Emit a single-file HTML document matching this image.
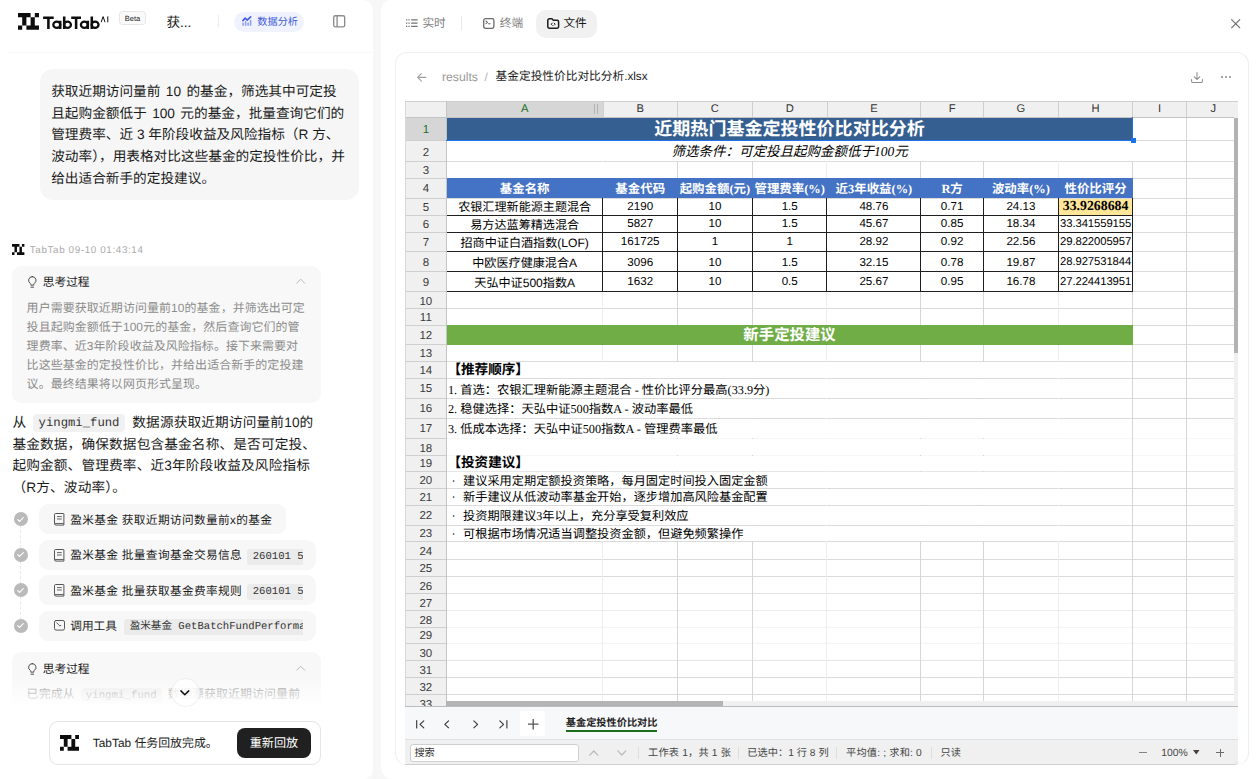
<!DOCTYPE html>
<html lang="zh-CN"><head>
<meta charset="utf-8">
<title>TabTab</title>
<style>
*{box-sizing:border-box;margin:0;padding:0}
html,body{width:1257px;height:779px;overflow:hidden;background:#f7f7f7;text-rendering:geometricPrecision;font-family:"Liberation Sans","Noto Sans CJK SC",sans-serif;color:#1a1a1a}
.abs{position:absolute}
#left{position:absolute;left:0;top:0;width:372.6px;height:779px;background:#fff;border-radius:0 10px 10px 0;overflow:hidden}
#right{position:absolute;left:380.5px;top:0;width:880px;height:779px;background:#fff;border-radius:10px 0 0 12px}
#sheet{position:absolute;left:0;top:0;width:1257px;height:779px;font-family:"Liberation Sans","Noto Sans CJK SC",sans-serif}
#sheet div{position:absolute;overflow:hidden}
#sheet div.c{overflow:visible;white-space:nowrap}
.t{position:absolute;white-space:nowrap}
.mono{font-family:"Liberation Mono","Noto Sans CJK SC",monospace}
svg{position:absolute;overflow:visible}
</style>
</head>
<body>
<!-- ================= LEFT PANEL ================= -->
<div id="left">
  <!-- header -->
  <svg style="left:18px;top:13.4px" width="21" height="16.7" viewBox="0 0 5 4" preserveAspectRatio="none"><path fill="#0d0d0d" d="M0 0h3v1h-1v2h-1v-2h-1zM4 0h1v1h-1zM3 1h1v2h1v1h-3v-1h1zM0 3h1v1h-1z"></path></svg>
  <svg style="left:43px;top:15.5px" width="66" height="14" viewBox="0 0 66 14" fill="none" stroke="#0d0d0d" stroke-width="2.55"><path d="M.1 1.800H10.700M5.400 1.800V13.100M17.200 4.800V13.100M21.200 .5V13.100M28.200 1.800H38M33.100 1.800V13.100M44.800 4.800V13.100M48.800 .5V13.100"></path><g stroke-width="2.250"><ellipse cx="13.800" cy="8.800" rx="3.500" ry="3.150"></ellipse><ellipse cx="24.500" cy="8.800" rx="3.450" ry="3.150"></ellipse><ellipse cx="41.400" cy="8.800" rx="3.500" ry="3.150"></ellipse><ellipse cx="52.100" cy="8.800" rx="3.450" ry="3.150"></ellipse></g><path d="M58.200 6.200L60.100 .6l1.900 5.600M64.800 .4V6.200" stroke-width="1" stroke-linejoin="miter"></path></svg>
  
  <div class="abs" style="left:119.4px;top:11.2px;width:26.2px;height:13.6px;border:1px solid #e6e6e6;border-radius:3.5px;background:#fafafa"></div>
  <div class="t" style="left:119.4px;top:11.2px;width:26.2px;text-align:center;font-size:7.5px;line-height:15.8px;color:#1a1a1a;letter-spacing:.05px">Beta</div>
  <div class="t" style="left:166.4px;top:12.5px;font-size:13.6px;line-height:20px;color:#111">获...</div>
  <div class="abs" style="left:217.8px;top:15px;width:1px;height:12px;background:#ececec"></div>
  <div class="abs" style="left:234.2px;top:11.8px;width:70px;height:20px;border-radius:10px;background:#f0f2fe"></div>
  <svg style="left:241.7px;top:15.8px" width="9.6" height="9.8" viewBox="0 0 9.6 9.8" fill="none" stroke="#4560dc" stroke-linecap="round" stroke-linejoin="round"><path d="M.9 4.600l2.300-2.400 2 1.900L8.700.9" stroke-width="1.700"></path><path d="M1.100 9.200V7.300M3.600 9.200V5.900M6.100 9.200V7M8.600 9.200V4.500" stroke-width="1.600" opacity=".55"></path></svg>
  <div class="t" style="left:257.3px;top:12.9px;font-size:10.2px;line-height:20.6px;color:#3f5bd8">数据分析</div>
  <svg style="left:332.8px;top:15.2px" width="12.4" height="12.6" viewBox="0 0 12.4 12.6" fill="none" stroke="#8c8c8c" stroke-width="1.350"><rect x=".7" y=".7" width="11" height="11.200" rx="1.700"></rect><path d="M4.100 .7v11.200"></path></svg>
  <div class="abs" style="left:8px;top:52.4px;width:364px;height:1px;background:#f8f8f8"></div>

  <!-- user bubble -->
  <div class="abs" style="left:39.8px;top:69.3px;width:318.8px;height:130.3px;border-radius:13px;background:#f6f6f6"></div>
  <div class="abs" style="left:51.2px;top:80.8px;width:300px;font-size:13.66px;line-height:21.85px;color:#1a1a1a;white-space:nowrap"><span style="word-spacing:1.6px">获取近期访问量前 10 的基金，筛选其中可定投<br>且起购金额低于 100 元的基金，批量查询它们的</span><br>管理费率、近 3 年阶段收益及风险指标（R 方、<br>波动率），用表格对比这些基金的定投性价比，并<br>给出适合新手的定投建议。</div>

  <!-- assistant header -->
  <svg style="left:11.8px;top:244px" width="12.4" height="10.9" viewBox="0 0 5 4" preserveAspectRatio="none"><path fill="#0d0d0d" d="M0 0h3v1h-1v2h-1v-2h-1zM4 0h1v1h-1zM3 1h1v2h1v1h-3v-1h1zM0 3h1v1h-1z"></path></svg>
  <div class="t" style="left:29.8px;top:244.8px;font-size:9.85px;line-height:12px;color:#ababab;letter-spacing:.62px">TabTab 09-10 01:43:14</div>

  <!-- thinking box 1 -->
  <div class="abs" style="left:11.8px;top:265.7px;width:309px;height:137.4px;border-radius:9px;background:#f8f8f8"></div>
  <svg style="left:27.5px;top:276.0px" width="8.6" height="11.8" viewBox="0 0 8.6 11.8" fill="none" stroke="#4a4a4a" stroke-width="1" stroke-linecap="round" stroke-linejoin="round"><path d="M4.300.6a3.700 3.700 0 0 0-2.100 6.750c.4.300.6.700.6 1.100v.7h3v-.7c0-.4.200-.8.600-1.100A3.700 3.700 0 0 0 4.300.6z"></path><path d="M3 11.200h2.600"></path></svg>
  <div class="t" style="left:42.8px;top:274.1px;font-size:11.7px;line-height:18px;color:#1a1a1a">思考过程</div>
  <svg style="left:295.6px;top:278.4px" width="9.4" height="6" viewBox="0 0 9.4 6" fill="none" stroke="#b9b9b9" stroke-width="1" stroke-linecap="round" stroke-linejoin="round"><path d="M.7 5.2l4-4 4 4"></path></svg>
  <div class="abs" style="left:26.6px;top:298.9px;width:290px;font-size:11.95px;line-height:19.05px;color:#8c8c8c;white-space:nowrap;letter-spacing:.1px">用户需要获取近期访问量前10的基金，并筛选出可定<br>投且起购金额低于100元的基金，然后查询它们的管<br>理费率、近3年阶段收益及风险指标。接下来需要对<br>比这些基金的定投性价比，并给出适合新手的定投建<br>议。最终结果将以网页形式呈现。</div>

  <!-- paragraph -->
  <div class="abs" style="left:12.4px;top:411.6px;width:320px;font-size:13.66px;line-height:21.9px;color:#1a1a1a;white-space:nowrap;letter-spacing:.15px">从<span class="mono" style="display:inline-block;margin:0 7px 0 6.6px;padding:0 5.8px;height:18.6px;line-height:19px;border-radius:4px;background:#f1f1f1;font-size:12.25px;vertical-align:1px;color:#333;letter-spacing:0">yingmi_fund</span>数据源获取近期访问量前10的<br>基金数据，确保数据包含基金名称、是否可定投、<br>起购金额、管理费率、近3年阶段收益及风险指标<br>（R方、波动率）。</div>

  <!-- steps -->
  <div class="abs" style="left:20.4px;top:520px;width:0;height:105px;border-left:1.6px dashed #e8e8e8"></div>
  <div class="abs" style="left:13.8px;top:512.3px;width:14.200px;height:14.200px;border-radius:50%;background:#bababa"></div>
<svg style="left:17.4px;top:516.8px" width="7" height="5.200" viewBox="0 0 7 5.200" fill="none" stroke="#fff" stroke-width="1.1" stroke-linecap="round" stroke-linejoin="round"><path d="M.7 2.700l1.900 1.800L6.300.7"></path></svg>
<div class="abs" style="left:38.600px;top:504.4px;width:247.8px;height:30.100px;border-radius:9px;background:#f7f7f7;overflow:hidden">
</div>
<svg style="left:53.8px;top:513.3px" width="10.4" height="12.6" viewBox="0 0 10.4 12.6" fill="none" stroke="#555" stroke-width="1" stroke-linejoin="round"><path d="M1.700.5h7.700a.5.5 0 0 1 .5.5v11.100H2a1.500 1.500 0 0 1-1.500-1.500V1.700A1.200 1.200 0 0 1 1.700.5z"></path><path d="M.6 10.500h9.200M3 3.600h4.800M3 6h4.800" stroke-width=".9"></path></svg>
<div class="abs" style="left:70.200px;top:504.4px;width:232.6px;height:29.600px;line-height:29.600px;white-space:nowrap;overflow:hidden"><span style="font-size:11.700px;color:#1a1a1a;letter-spacing:.33px;position:relative;top:.7px">盈米基金 获取近期访问数量前x的基金</span></div>
<div class="abs" style="left:13.8px;top:547.7px;width:14.200px;height:14.200px;border-radius:50%;background:#bababa"></div>
<svg style="left:17.4px;top:552.2px" width="7" height="5.200" viewBox="0 0 7 5.200" fill="none" stroke="#fff" stroke-width="1.1" stroke-linecap="round" stroke-linejoin="round"><path d="M.7 2.700l1.900 1.800L6.300.7"></path></svg>
<div class="abs" style="left:38.600px;top:539.8px;width:277.0px;height:30.100px;border-radius:9px;background:#f7f7f7;overflow:hidden">
</div>
<svg style="left:53.8px;top:548.7px" width="10.4" height="12.6" viewBox="0 0 10.4 12.6" fill="none" stroke="#555" stroke-width="1" stroke-linejoin="round"><path d="M1.700.5h7.700a.5.5 0 0 1 .5.5v11.100H2a1.500 1.500 0 0 1-1.500-1.500V1.700A1.200 1.200 0 0 1 1.700.5z"></path><path d="M.6 10.500h9.200M3 3.600h4.800M3 6h4.800" stroke-width=".9"></path></svg>
<div class="abs" style="left:70.200px;top:539.8px;width:232.6px;height:29.600px;line-height:29.600px;white-space:nowrap;overflow:hidden"><span style="font-size:11.700px;color:#1a1a1a;letter-spacing:.33px;position:relative;top:.7px">盈米基金 批量查询基金交易信息</span><span class="mono" style="display:inline-block;margin-left:5.2px;padding:0 5.500px;height:16px;line-height:16.500px;border-radius:3px 0 0 3px;background:#ebebeb;font-size:10.600px;color:#333;vertical-align:middle;position:relative;top:2px;width:200px">260101 5</span></div>
<div class="abs" style="left:13.8px;top:583.1px;width:14.200px;height:14.200px;border-radius:50%;background:#bababa"></div>
<svg style="left:17.4px;top:587.6px" width="7" height="5.200" viewBox="0 0 7 5.200" fill="none" stroke="#fff" stroke-width="1.1" stroke-linecap="round" stroke-linejoin="round"><path d="M.7 2.700l1.900 1.800L6.300.7"></path></svg>
<div class="abs" style="left:38.600px;top:575.2px;width:277.0px;height:30.100px;border-radius:9px;background:#f7f7f7;overflow:hidden">
</div>
<svg style="left:53.8px;top:584.1px" width="10.4" height="12.6" viewBox="0 0 10.4 12.6" fill="none" stroke="#555" stroke-width="1" stroke-linejoin="round"><path d="M1.700.5h7.700a.5.5 0 0 1 .5.5v11.100H2a1.500 1.500 0 0 1-1.500-1.500V1.700A1.200 1.200 0 0 1 1.700.5z"></path><path d="M.6 10.500h9.200M3 3.600h4.800M3 6h4.800" stroke-width=".9"></path></svg>
<div class="abs" style="left:70.200px;top:575.2px;width:232.6px;height:29.600px;line-height:29.600px;white-space:nowrap;overflow:hidden"><span style="font-size:11.700px;color:#1a1a1a;letter-spacing:.33px;position:relative;top:.7px">盈米基金 批量获取基金费率规则</span><span class="mono" style="display:inline-block;margin-left:5.2px;padding:0 5.500px;height:16px;line-height:16.500px;border-radius:3px 0 0 3px;background:#ebebeb;font-size:10.600px;color:#333;vertical-align:middle;position:relative;top:2px;width:200px">260101 5</span></div>
<div class="abs" style="left:13.8px;top:618.5px;width:14.200px;height:14.200px;border-radius:50%;background:#bababa"></div>
<svg style="left:17.4px;top:623.0px" width="7" height="5.200" viewBox="0 0 7 5.200" fill="none" stroke="#fff" stroke-width="1.1" stroke-linecap="round" stroke-linejoin="round"><path d="M.7 2.700l1.900 1.800L6.300.7"></path></svg>
<div class="abs" style="left:38.600px;top:610.6px;width:277.0px;height:30.100px;border-radius:9px;background:#f7f7f7;overflow:hidden">
</div>
<svg style="left:53.6px;top:620.3px" width="11" height="10.6" viewBox="0 0 11 10.6" fill="none" stroke="#555" stroke-width="1" stroke-linecap="round" stroke-linejoin="round"><rect x=".5" y=".5" width="10" height="9.600" rx="1.600"></rect><path d="M2.800 3l1.700 1.500M5.300 5.600h1.500"></path></svg>
<div class="abs" style="left:70.200px;top:610.6px;width:232.6px;height:29.600px;line-height:29.600px;white-space:nowrap;overflow:hidden"><span style="font-size:11.700px;color:#1a1a1a;letter-spacing:0px;position:relative;top:.7px">调用工具</span><span class="mono" style="display:inline-block;margin-left:7.2px;padding:0 5.500px;height:16px;line-height:16.500px;border-radius:3px 0 0 3px;background:#ebebeb;font-size:10.600px;color:#333;vertical-align:middle;position:relative;top:2px;width:200px">盈米基金 GetBatchFundPerforma</span></div>

  <!-- thinking box 2 -->
  <div class="abs" style="left:12.2px;top:652.2px;width:309px;height:70px;border-radius:9px;background:#f8f8f8"></div>
  <svg style="left:27.5px;top:662.6px" width="8.6" height="11.8" viewBox="0 0 8.6 11.8" fill="none" stroke="#4a4a4a" stroke-width="1" stroke-linecap="round" stroke-linejoin="round"><path d="M4.300.6a3.700 3.700 0 0 0-2.100 6.750c.4.300.6.700.6 1.100v.7h3v-.7c0-.4.200-.8.600-1.100A3.700 3.700 0 0 0 4.300.6z"></path><path d="M3 11.200h2.600"></path></svg>
  <div class="t" style="left:42.8px;top:660.6px;font-size:11.7px;line-height:18px;color:#1a1a1a">思考过程</div>
  <svg style="left:295.6px;top:664.8px" width="9.4" height="6" viewBox="0 0 9.4 6" fill="none" stroke="#b9b9b9" stroke-width="1" stroke-linecap="round" stroke-linejoin="round"><path d="M.7 5.2l4-4 4 4"></path></svg>
  <div class="abs" style="left:26.6px;top:684.8px;width:290px;font-size:11.95px;line-height:19.05px;color:#8c8c8c;white-space:nowrap;letter-spacing:.1px">已完成从<span class="mono" style="display:inline-block;margin:0 6px 0 6px;padding:0 5px;height:16.4px;line-height:17px;border-radius:4px;background:#ececec;font-size:10.6px;vertical-align:0px;color:#999">yingmi_fund</span>数据源获取近期访问量前</div>
  <!-- fade -->
  <div class="abs" style="left:0;top:678px;width:372px;height:28px;background:linear-gradient(to bottom,rgba(255,255,255,0) 0%,rgba(255,255,255,1) 100%)"></div>
  <div class="abs" style="left:0;top:706px;width:372px;height:73px;background:#fff"></div>
  <!-- scroll button -->
  <div class="abs" style="left:170.8px;top:678.2px;width:28.8px;height:28.8px;border-radius:50%;background:rgba(255,255,255,.72);border:1px solid #efefef"></div>
  <svg style="left:180.4px;top:689.6px" width="9.6" height="6" viewBox="0 0 9.6 6" fill="none" stroke="#111" stroke-width="1.5" stroke-linecap="round" stroke-linejoin="round"><path d="M.9.9l3.900 3.900L8.700.9"></path></svg>

  <!-- bottom card -->
  <div class="abs" style="left:49.3px;top:720.8px;width:272px;height:44.7px;border:1px solid #e6e6e6;border-radius:9px;background:#fff"></div>
  <svg style="left:60px;top:735.2px" width="19" height="15.8" viewBox="0 0 5 4" preserveAspectRatio="none"><path fill="#0d0d0d" d="M0 0h3v1h-1v2h-1v-2h-1zM4 0h1v1h-1zM3 1h1v2h1v1h-3v-1h1zM0 3h1v1h-1z"></path></svg>
  <div class="t" style="left:92.8px;top:733.4px;font-size:11.9px;line-height:20px;color:#1a1a1a">TabTab 任务回放完成。</div>
  <div class="abs" style="left:236.9px;top:728.2px;width:74px;height:30px;border-radius:8px;background:#202020"></div>
  <div class="t" style="left:236.9px;top:728.2px;width:74px;text-align:center;font-size:12.1px;line-height:30px;color:#fff">重新回放</div>
</div>

<!-- ================= RIGHT PANEL ================= -->
<div id="right"></div>
<!-- tabs -->
<svg style="left:405.6px;top:19.2px" width="11.6" height="8.2" viewBox="0 0 11.6 8.2" fill="none" stroke="#727272" stroke-width="1.25"><path d="M0 .8h1.300M2.400 .8h1.300M5.200 .8h6.400M0 4.100h1.300M2.400 4.100h1.300M5.200 4.100h6.400M0 7.400h1.300M2.400 7.400h1.300M5.200 7.400h6.400"></path></svg>
<div class="t" style="left:422.4px;top:14.5px;font-size:11.7px;line-height:18px;color:#7f7f7f">实时</div>
<div class="abs" style="left:461px;top:16.4px;width:1px;height:13.2px;background:#e8e8e8"></div>
<svg style="left:483.2px;top:17.9px" width="11.6" height="11" viewBox="0 0 11.6 11" fill="none" stroke="#6a6a6a" stroke-width="1.3" stroke-linecap="round" stroke-linejoin="round"><rect x=".7" y=".7" width="10.200" height="9.600" rx="1.700"></rect><path d="M3 3l1.500 1.300L3 5.600M5.500 5.800h1.700" stroke-width="1.050"></path></svg>
<div class="t" style="left:499.8px;top:14.5px;font-size:11.7px;line-height:18px;color:#7f7f7f">终端</div>
<div class="abs" style="left:536.2px;top:9.7px;width:60.9px;height:27.9px;border-radius:10px;background:#f1f1f1"></div>
<svg style="left:546.8px;top:17.8px" width="12.4" height="11" viewBox="0 0 12.4 11" fill="none" stroke="#1c1c1c" stroke-width="1.5" stroke-linecap="round" stroke-linejoin="round"><path d="M.8 2.300V8.700a1.500 1.500 0 0 0 1.500 1.500h7.800a1.500 1.500 0 0 0 1.500-1.500V3.700a1.500 1.500 0 0 0-1.500-1.500H6.300L5 .8H2.300A1.500 1.500 0 0 0 .8 2.300z"></path><path d="M5.300 5.100L4.200 6.200l1.100 1.100M7.100 5.100l1.100 1.100-1.100 1.100" stroke-width="1"></path></svg>
<div class="t" style="left:563.4px;top:14.5px;font-size:11.7px;line-height:18px;color:#1a1a1a">文件</div>
<svg style="left:1231.2px;top:18.6px" width="9.4" height="9.4" viewBox="0 0 9.4 9.4" fill="none" stroke="#666" stroke-width="1.05" stroke-linecap="round"><path d="M.6.6l8.200 8.200M8.800.6L.6 8.800"></path></svg>

<!-- file card -->
<div class="abs" style="left:394.6px;top:52px;width:854.2px;height:713.4px;border:1px solid #efefef;border-bottom-color:#f5f5f5;border-radius:12px;background:#fff"></div>
<svg style="left:416.6px;top:72.8px" width="9.4" height="8.8" viewBox="0 0 9.4 8.8" fill="none" stroke="#a0a0a0" stroke-width="1.1" stroke-linecap="round" stroke-linejoin="round"><path d="M8.800 4.400H.8M4.400.7L.7 4.400l3.700 3.700"></path></svg>
<div class="t" style="left:442px;top:68px;font-size:12.2px;line-height:18px;color:#9a9a9a">results</div>
<div class="t" style="left:484.6px;top:68px;font-size:11.9px;line-height:18px;color:#b0b0b0">/</div>
<div class="t" style="left:495.6px;top:68px;font-size:11.7px;line-height:18px;color:#1a1a1a">基金定投性价比对比分析.xlsx</div>
<svg style="left:1191.2px;top:71.6px" width="12" height="11.2" viewBox="0 0 12 11.2" fill="none" stroke="#8c8c8c" stroke-width="1.05" stroke-linecap="round" stroke-linejoin="round"><path d="M6 .6v6.800M3.200 4.800L6 7.500l2.800-2.700M.6 7.600v1.600a1.400 1.400 0 0 0 1.400 1.400h8a1.400 1.400 0 0 0 1.400-1.400V7.600"></path></svg>
<div class="abs" style="left:1221px;top:76.3px;width:2px;height:1.8px;background:#8a8a8a;border-radius:1px"></div>
<div class="abs" style="left:1225.2px;top:76.3px;width:2px;height:1.8px;background:#8a8a8a;border-radius:1px"></div>
<div class="abs" style="left:1229.4px;top:76.3px;width:2px;height:1.8px;background:#8a8a8a;border-radius:1px"></div>

<!-- spreadsheet -->
<div id="sheet">
<div style="left:405.3px;top:101.4px;width:833.0px;height:599.4px;background:#fff;"></div>
<div style="left:446.4px;top:140.0px;width:787.7px;height:1.0px;background:#dbdbdb;"></div>
<div style="left:446.4px;top:161.0px;width:787.7px;height:1.0px;background:#dbdbdb;"></div>
<div style="left:446.4px;top:178.0px;width:787.7px;height:1.0px;background:#dbdbdb;"></div>
<div style="left:446.4px;top:198.0px;width:787.7px;height:1.0px;background:#dbdbdb;"></div>
<div style="left:446.4px;top:215.0px;width:787.7px;height:1.0px;background:#dbdbdb;"></div>
<div style="left:446.4px;top:232.0px;width:787.7px;height:1.0px;background:#dbdbdb;"></div>
<div style="left:446.4px;top:251.0px;width:787.7px;height:1.0px;background:#dbdbdb;"></div>
<div style="left:446.4px;top:271.0px;width:787.7px;height:1.0px;background:#dbdbdb;"></div>
<div style="left:446.4px;top:291.0px;width:787.7px;height:1.0px;background:#dbdbdb;"></div>
<div style="left:446.4px;top:308.0px;width:787.7px;height:1.0px;background:#dbdbdb;"></div>
<div style="left:446.4px;top:325.0px;width:787.7px;height:1.0px;background:#dbdbdb;"></div>
<div style="left:446.4px;top:344.0px;width:787.7px;height:1.0px;background:#dbdbdb;"></div>
<div style="left:446.4px;top:361.0px;width:787.7px;height:1.0px;background:#dbdbdb;"></div>
<div style="left:446.4px;top:378.0px;width:787.7px;height:1.0px;background:#dbdbdb;"></div>
<div style="left:446.4px;top:398.0px;width:787.7px;height:1.0px;background:#dbdbdb;"></div>
<div style="left:446.4px;top:418.0px;width:787.7px;height:1.0px;background:#dbdbdb;"></div>
<div style="left:446.4px;top:438.0px;width:787.7px;height:1.0px;background:#f7f7f7;"></div>
<div style="left:446.4px;top:455.0px;width:787.7px;height:1.0px;background:#f7f7f7;"></div>
<div style="left:446.4px;top:471.0px;width:787.7px;height:1.0px;background:#e6e6e6;"></div>
<div style="left:446.4px;top:488.0px;width:787.7px;height:1.0px;background:#dbdbdb;"></div>
<div style="left:446.4px;top:505.0px;width:787.7px;height:1.0px;background:#dbdbdb;"></div>
<div style="left:446.4px;top:525.0px;width:787.7px;height:1.0px;background:#dbdbdb;"></div>
<div style="left:446.4px;top:541.0px;width:787.7px;height:1.0px;background:#dbdbdb;"></div>
<div style="left:446.4px;top:559.0px;width:787.7px;height:1.0px;background:#dbdbdb;"></div>
<div style="left:446.4px;top:576.0px;width:787.7px;height:1.0px;background:#dbdbdb;"></div>
<div style="left:446.4px;top:593.0px;width:787.7px;height:1.0px;background:#e2e2e2;"></div>
<div style="left:446.4px;top:610.0px;width:787.7px;height:1.0px;background:#ececec;"></div>
<div style="left:446.4px;top:627.0px;width:787.7px;height:1.0px;background:#f4f4f4;"></div>
<div style="left:446.4px;top:643.0px;width:787.7px;height:1.0px;background:#f4f4f4;"></div>
<div style="left:446.4px;top:660.0px;width:787.7px;height:1.0px;background:#e6e6e6;"></div>
<div style="left:446.4px;top:677.0px;width:787.7px;height:1.0px;background:#dbdbdb;"></div>
<div style="left:446.4px;top:694.0px;width:787.7px;height:1.0px;background:#dbdbdb;"></div>
<div style="left:602.0px;top:117.4px;width:1.0px;height:583.4px;background:#efefef;"></div>
<div style="left:677.0px;top:117.4px;width:1.0px;height:583.4px;background:#d6d6d6;"></div>
<div style="left:752.0px;top:117.4px;width:1.0px;height:583.4px;background:#d6d6d6;"></div>
<div style="left:826.0px;top:117.4px;width:1.0px;height:583.4px;background:#efefef;"></div>
<div style="left:920.0px;top:117.4px;width:1.0px;height:583.4px;background:#d6d6d6;"></div>
<div style="left:983.0px;top:117.4px;width:1.0px;height:583.4px;background:#d6d6d6;"></div>
<div style="left:1058.0px;top:117.4px;width:1.0px;height:583.4px;background:#efefef;"></div>
<div style="left:1132.0px;top:117.4px;width:1.0px;height:583.4px;background:#d6d6d6;"></div>
<div style="left:1186.0px;top:117.4px;width:1.0px;height:583.4px;background:#d6d6d6;"></div>
<div class="c" style="left:446.4px;top:117.4px;width:686.3px;height:23.3px;background:#365f91;color:#fff;font-weight:bold;font-size:18.05px;line-height:24.3px;text-align:center;">近期热门基金定投性价比对比分析</div>
<div class="c" style="left:446.4px;top:141.2px;width:686.3px;height:19.6px;background:#fff;color:#000;font-style:italic;font-size:13.5px;line-height:22.8px;text-align:center;font-family:'Liberation Serif','Noto Sans CJK SC',sans-serif;">筛选条件：可定投且起购金额低于100元</div>
<div style="left:446.4px;top:178.2px;width:686.3px;height:20.2px;background:#4472c4;"></div>
<div class="c" style="left:440.4px;top:178.2px;width:168.6px;height:20.2px;color:#fff;font-weight:bold;font-size:12.45px;line-height:22.7px;text-align:center;font-family:'Liberation Serif','Noto Sans CJK SC',sans-serif;">基金名称</div>
<div class="c" style="left:597.0px;top:178.2px;width:86.4px;height:20.2px;color:#fff;font-weight:bold;font-size:12.45px;line-height:22.7px;text-align:center;font-family:'Liberation Serif','Noto Sans CJK SC',sans-serif;">基金代码</div>
<div class="c" style="left:671.4px;top:178.2px;width:87.0px;height:20.2px;color:#fff;font-weight:bold;font-size:12.45px;line-height:22.7px;text-align:center;font-family:'Liberation Serif','Noto Sans CJK SC',sans-serif;">起购金额(元)</div>
<div class="c" style="left:746.4px;top:178.2px;width:86.6px;height:20.2px;color:#fff;font-weight:bold;font-size:12.45px;line-height:22.7px;text-align:center;font-family:'Liberation Serif','Noto Sans CJK SC',sans-serif;">管理费率(%)</div>
<div class="c" style="left:821.0px;top:178.2px;width:105.8px;height:20.2px;color:#fff;font-weight:bold;font-size:12.45px;line-height:22.7px;text-align:center;font-family:'Liberation Serif','Noto Sans CJK SC',sans-serif;">近3年收益(%)</div>
<div class="c" style="left:914.8px;top:178.2px;width:74.6px;height:20.2px;color:#fff;font-weight:bold;font-size:12.45px;line-height:22.7px;text-align:center;font-family:'Liberation Serif','Noto Sans CJK SC',sans-serif;">R方</div>
<div class="c" style="left:977.4px;top:178.2px;width:87.1px;height:20.2px;color:#fff;font-weight:bold;font-size:12.45px;line-height:22.7px;text-align:center;font-family:'Liberation Serif','Noto Sans CJK SC',sans-serif;">波动率(%)</div>
<div class="c" style="left:1052.5px;top:178.2px;width:86.2px;height:20.2px;color:#fff;font-weight:bold;font-size:12.45px;line-height:22.7px;text-align:center;font-family:'Liberation Serif','Noto Sans CJK SC',sans-serif;">性价比评分</div>
<div class="c" style="left:442.4px;top:198.4px;width:164.6px;height:16.8px;font-size:12.1px;color:#000;text-align:center;line-height:19.8px;">农银汇理新能源主题混合</div>
<div class="c" style="left:599.0px;top:198.4px;width:82.4px;height:16.8px;font-size:11.6px;color:#000;text-align:center;line-height:17.7px;">2190</div>
<div class="c" style="left:673.4px;top:198.4px;width:83.0px;height:16.8px;font-size:11.6px;color:#000;text-align:center;line-height:17.7px;">10</div>
<div class="c" style="left:748.4px;top:198.4px;width:82.6px;height:16.8px;font-size:11.6px;color:#000;text-align:center;line-height:17.7px;">1.5</div>
<div class="c" style="left:823.0px;top:198.4px;width:101.8px;height:16.8px;font-size:11.6px;color:#000;text-align:center;line-height:17.7px;">48.76</div>
<div class="c" style="left:916.8px;top:198.4px;width:70.6px;height:16.8px;font-size:11.6px;color:#000;text-align:center;line-height:17.7px;">0.71</div>
<div class="c" style="left:979.4px;top:198.4px;width:83.1px;height:16.8px;font-size:11.6px;color:#000;text-align:center;line-height:17.7px;">24.13</div>
<div style="left:1059.0px;top:198.9px;width:73.2px;height:15.8px;background:#ffe699;"></div>
<div class="c" style="left:1054.5px;top:198.4px;width:82.2px;height:16.8px;font-size:11.6px;color:#000;text-align:center;line-height:17.7px;font-weight:bold;font-family:'Liberation Serif',serif;font-size:13.8px;letter-spacing:0px;line-height:16.3px;">33.9268684</div>
<div class="c" style="left:442.4px;top:215.2px;width:164.6px;height:17.2px;font-size:12.1px;color:#000;text-align:center;line-height:20.2px;">易方达蓝筹精选混合</div>
<div class="c" style="left:599.0px;top:215.2px;width:82.4px;height:17.2px;font-size:11.6px;color:#000;text-align:center;line-height:18.1px;">5827</div>
<div class="c" style="left:673.4px;top:215.2px;width:83.0px;height:17.2px;font-size:11.6px;color:#000;text-align:center;line-height:18.1px;">10</div>
<div class="c" style="left:748.4px;top:215.2px;width:82.6px;height:17.2px;font-size:11.6px;color:#000;text-align:center;line-height:18.1px;">1.5</div>
<div class="c" style="left:823.0px;top:215.2px;width:101.8px;height:17.2px;font-size:11.6px;color:#000;text-align:center;line-height:18.1px;">45.67</div>
<div class="c" style="left:916.8px;top:215.2px;width:70.6px;height:17.2px;font-size:11.6px;color:#000;text-align:center;line-height:18.1px;">0.85</div>
<div class="c" style="left:979.4px;top:215.2px;width:83.1px;height:17.2px;font-size:11.6px;color:#000;text-align:center;line-height:18.1px;">18.34</div>
<div class="c" style="left:1054.5px;top:215.2px;width:82.2px;height:17.2px;font-size:11.6px;color:#000;text-align:center;line-height:18.1px;letter-spacing:-0.1px;font-size:11.3px;line-height:19.0px;">33.341559155</div>
<div class="c" style="left:442.4px;top:232.4px;width:164.6px;height:19.2px;font-size:12.1px;color:#000;text-align:center;line-height:22.2px;">招商中证白酒指数(LOF)</div>
<div class="c" style="left:599.0px;top:232.4px;width:82.4px;height:19.2px;font-size:11.6px;color:#000;text-align:center;line-height:20.1px;">161725</div>
<div class="c" style="left:673.4px;top:232.4px;width:83.0px;height:19.2px;font-size:11.6px;color:#000;text-align:center;line-height:20.1px;">1</div>
<div class="c" style="left:748.4px;top:232.4px;width:82.6px;height:19.2px;font-size:11.6px;color:#000;text-align:center;line-height:20.1px;">1</div>
<div class="c" style="left:823.0px;top:232.4px;width:101.8px;height:19.2px;font-size:11.6px;color:#000;text-align:center;line-height:20.1px;">28.92</div>
<div class="c" style="left:916.8px;top:232.4px;width:70.6px;height:19.2px;font-size:11.6px;color:#000;text-align:center;line-height:20.1px;">0.92</div>
<div class="c" style="left:979.4px;top:232.4px;width:83.1px;height:19.2px;font-size:11.6px;color:#000;text-align:center;line-height:20.1px;">22.56</div>
<div class="c" style="left:1054.5px;top:232.4px;width:82.2px;height:19.2px;font-size:11.6px;color:#000;text-align:center;line-height:20.1px;letter-spacing:-0.1px;font-size:11.3px;line-height:21.0px;">29.822005957</div>
<div class="c" style="left:442.4px;top:251.6px;width:164.6px;height:20.1px;font-size:12.1px;color:#000;text-align:center;line-height:23.1px;">中欧医疗健康混合A</div>
<div class="c" style="left:599.0px;top:251.6px;width:82.4px;height:20.1px;font-size:11.6px;color:#000;text-align:center;line-height:21.0px;">3096</div>
<div class="c" style="left:673.4px;top:251.6px;width:83.0px;height:20.1px;font-size:11.6px;color:#000;text-align:center;line-height:21.0px;">10</div>
<div class="c" style="left:748.4px;top:251.6px;width:82.6px;height:20.1px;font-size:11.6px;color:#000;text-align:center;line-height:21.0px;">1.5</div>
<div class="c" style="left:823.0px;top:251.6px;width:101.8px;height:20.1px;font-size:11.6px;color:#000;text-align:center;line-height:21.0px;">32.15</div>
<div class="c" style="left:916.8px;top:251.6px;width:70.6px;height:20.1px;font-size:11.6px;color:#000;text-align:center;line-height:21.0px;">0.78</div>
<div class="c" style="left:979.4px;top:251.6px;width:83.1px;height:20.1px;font-size:11.6px;color:#000;text-align:center;line-height:21.0px;">19.87</div>
<div class="c" style="left:1054.5px;top:251.6px;width:82.2px;height:20.1px;font-size:11.6px;color:#000;text-align:center;line-height:21.0px;letter-spacing:-0.1px;font-size:11.3px;line-height:21.9px;">28.927531844</div>
<div class="c" style="left:442.4px;top:271.7px;width:164.6px;height:19.8px;font-size:12.1px;color:#000;text-align:center;line-height:22.8px;">天弘中证500指数A</div>
<div class="c" style="left:599.0px;top:271.7px;width:82.4px;height:19.8px;font-size:11.6px;color:#000;text-align:center;line-height:20.7px;">1632</div>
<div class="c" style="left:673.4px;top:271.7px;width:83.0px;height:19.8px;font-size:11.6px;color:#000;text-align:center;line-height:20.7px;">10</div>
<div class="c" style="left:748.4px;top:271.7px;width:82.6px;height:19.8px;font-size:11.6px;color:#000;text-align:center;line-height:20.7px;">0.5</div>
<div class="c" style="left:823.0px;top:271.7px;width:101.8px;height:19.8px;font-size:11.6px;color:#000;text-align:center;line-height:20.7px;">25.67</div>
<div class="c" style="left:916.8px;top:271.7px;width:70.6px;height:19.8px;font-size:11.6px;color:#000;text-align:center;line-height:20.7px;">0.95</div>
<div class="c" style="left:979.4px;top:271.7px;width:83.1px;height:19.8px;font-size:11.6px;color:#000;text-align:center;line-height:20.7px;">16.78</div>
<div class="c" style="left:1054.5px;top:271.7px;width:82.2px;height:19.8px;font-size:11.6px;color:#000;text-align:center;line-height:20.7px;letter-spacing:-0.1px;font-size:11.3px;line-height:21.6px;">27.224413951</div>
<div style="left:446.4px;top:215.0px;width:686.8px;height:1.0px;background:#1e1e1e;"></div>
<div style="left:446.4px;top:232.0px;width:686.8px;height:1.0px;background:#1e1e1e;"></div>
<div style="left:446.4px;top:251.0px;width:686.8px;height:1.0px;background:#1e1e1e;"></div>
<div style="left:446.4px;top:271.0px;width:686.8px;height:1.0px;background:#1e1e1e;"></div>
<div style="left:446.4px;top:291.0px;width:686.8px;height:1.0px;background:#1e1e1e;"></div>
<div style="left:602.0px;top:198.4px;width:1.0px;height:93.6px;background:#1e1e1e;"></div>
<div style="left:677.0px;top:198.4px;width:1.0px;height:93.6px;background:#1e1e1e;"></div>
<div style="left:752.0px;top:198.4px;width:1.0px;height:93.6px;background:#1e1e1e;"></div>
<div style="left:826.0px;top:198.4px;width:1.0px;height:93.6px;background:#1e1e1e;"></div>
<div style="left:920.0px;top:198.4px;width:1.0px;height:93.6px;background:#1e1e1e;"></div>
<div style="left:983.0px;top:198.4px;width:1.0px;height:93.6px;background:#1e1e1e;"></div>
<div style="left:1058.0px;top:198.4px;width:1.0px;height:93.6px;background:#1e1e1e;"></div>
<div style="left:1132.0px;top:198.4px;width:1.0px;height:93.6px;background:#1e1e1e;"></div>
<div class="c" style="left:446.4px;top:325.2px;width:686.3px;height:19.6px;background:#70ad47;color:#fff;font-weight:bold;font-size:15.4px;line-height:21.1px;text-align:center;">新手定投建议</div>
<div style="left:446.4px;top:362.0px;width:685.6px;height:16.0px;background:#fff;"></div>
<div class="c" style="left:447.4px;top:361.2px;width:685.3px;height:17.1px;white-space:nowrap;color:#000;line-height:19.1px;font-weight:bold;font-size:13.6px;position:absolute;margin-top:-1px;">【推荐顺序】</div>
<div style="left:446.4px;top:379.0px;width:685.6px;height:19.0px;background:#fff;"></div>
<div class="c" style="left:447.9px;top:378.3px;width:684.8px;height:19.9px;white-space:nowrap;color:#000;line-height:21.9px;font-size:12.25px;margin-top:1.3px;font-family:'Liberation Serif','Noto Sans CJK SC',sans-serif;">1. 首选：农银汇理新能源主题混合 - 性价比评分最高(33.9分)</div>
<div style="left:446.4px;top:399.0px;width:685.6px;height:19.0px;background:#fff;"></div>
<div class="c" style="left:447.9px;top:398.2px;width:684.8px;height:20.1px;white-space:nowrap;color:#000;line-height:22.1px;font-size:12.25px;font-family:'Liberation Serif','Noto Sans CJK SC',sans-serif;">2. 稳健选择：天弘中证500指数A - 波动率最低</div>
<div style="left:446.4px;top:419.0px;width:685.6px;height:19.0px;background:#fff;"></div>
<div class="c" style="left:447.9px;top:418.3px;width:684.8px;height:20.2px;white-space:nowrap;color:#000;line-height:22.2px;font-size:12.25px;font-family:'Liberation Serif','Noto Sans CJK SC',sans-serif;">3. 低成本选择：天弘中证500指数A - 管理费率最低</div>
<div style="left:446.4px;top:439.0px;width:685.6px;height:16.0px;background:#fff;"></div>
<div class="c" style="left:446.4px;top:438.5px;width:686.3px;height:16.8px;white-space:nowrap;color:#000;line-height:18.8px;"></div>
<div style="left:446.4px;top:456.0px;width:685.6px;height:15.0px;background:#fff;"></div>
<div class="c" style="left:447.4px;top:455.3px;width:685.3px;height:16.4px;white-space:nowrap;color:#000;line-height:18.4px;font-weight:bold;font-size:13.6px;margin-top:-1px;">【投资建议】</div>
<div style="left:446.4px;top:472.0px;width:685.6px;height:16.0px;background:#fff;"></div>
<div class="c" style="left:451.4px;top:471.7px;width:681.3px;height:16.4px;white-space:nowrap;color:#000;line-height:18.4px;font-size:12.2px;font-family:'Liberation Serif','Noto Sans CJK SC',sans-serif;">·<i style="display:inline-block;width:7.6px"></i>建议采用定期定额投资策略，每月固定时间投入固定金额</div>
<div style="left:446.4px;top:489.0px;width:685.6px;height:16.0px;background:#fff;"></div>
<div class="c" style="left:451.4px;top:488.1px;width:681.3px;height:17.1px;white-space:nowrap;color:#000;line-height:19.1px;font-size:12.2px;font-family:'Liberation Serif','Noto Sans CJK SC',sans-serif;">·<i style="display:inline-block;width:7.6px"></i>新手建议从低波动率基金开始，逐步增加高风险基金配置</div>
<div style="left:446.4px;top:506.0px;width:685.6px;height:19.0px;background:#fff;"></div>
<div class="c" style="left:451.4px;top:505.2px;width:681.3px;height:20.2px;white-space:nowrap;color:#000;line-height:22.2px;font-size:12.2px;font-family:'Liberation Serif','Noto Sans CJK SC',sans-serif;">·<i style="display:inline-block;width:7.6px"></i>投资期限建议3年以上，充分享受复利效应</div>
<div style="left:446.4px;top:526.0px;width:685.6px;height:15.0px;background:#fff;"></div>
<div class="c" style="left:451.4px;top:525.4px;width:681.3px;height:16.5px;white-space:nowrap;color:#000;line-height:18.5px;font-size:12.2px;font-family:'Liberation Serif','Noto Sans CJK SC',sans-serif;">·<i style="display:inline-block;width:7.6px"></i>可根据市场情况适当调整投资金额，但避免频繁操作</div>
<div style="left:446.4px;top:162.0px;width:230.6px;height:16.0px;background:#fff;"></div>
<div style="left:405.3px;top:101.4px;width:833.0px;height:16.0px;background:#f0f0f0;"></div>
<div style="left:405.3px;top:117.4px;width:41.1px;height:589.2px;background:#f0f0f0;"></div>
<div style="left:446.4px;top:101.4px;width:156.6px;height:16.0px;background:#d6d6d6;"></div>
<div style="left:405.3px;top:117.4px;width:41.1px;height:23.3px;background:#d6d6d6;"></div>
<div class="c" style="left:446.4px;top:101.4px;width:156.6px;height:16.0px;text-align:center;font-size:11.2px;color:#1b6e1b;line-height:17.0px;">A</div>
<div class="c" style="left:603.0px;top:101.4px;width:74.4px;height:16.0px;text-align:center;font-size:11.2px;color:#333;line-height:17.0px;">B</div>
<div style="left:602.5px;top:101.4px;width:1.0px;height:16.0px;background:#cfcfcf;"></div>
<div class="c" style="left:677.4px;top:101.4px;width:75.0px;height:16.0px;text-align:center;font-size:11.2px;color:#333;line-height:17.0px;">C</div>
<div style="left:676.9px;top:101.4px;width:1.0px;height:16.0px;background:#cfcfcf;"></div>
<div class="c" style="left:752.4px;top:101.4px;width:74.6px;height:16.0px;text-align:center;font-size:11.2px;color:#333;line-height:17.0px;">D</div>
<div style="left:751.9px;top:101.4px;width:1.0px;height:16.0px;background:#cfcfcf;"></div>
<div class="c" style="left:827.0px;top:101.4px;width:93.8px;height:16.0px;text-align:center;font-size:11.2px;color:#333;line-height:17.0px;">E</div>
<div style="left:826.5px;top:101.4px;width:1.0px;height:16.0px;background:#cfcfcf;"></div>
<div class="c" style="left:920.8px;top:101.4px;width:62.6px;height:16.0px;text-align:center;font-size:11.2px;color:#333;line-height:17.0px;">F</div>
<div style="left:920.3px;top:101.4px;width:1.0px;height:16.0px;background:#cfcfcf;"></div>
<div class="c" style="left:983.4px;top:101.4px;width:75.1px;height:16.0px;text-align:center;font-size:11.2px;color:#333;line-height:17.0px;">G</div>
<div style="left:982.9px;top:101.4px;width:1.0px;height:16.0px;background:#cfcfcf;"></div>
<div class="c" style="left:1058.5px;top:101.4px;width:74.2px;height:16.0px;text-align:center;font-size:11.2px;color:#333;line-height:17.0px;">H</div>
<div style="left:1058.0px;top:101.4px;width:1.0px;height:16.0px;background:#cfcfcf;"></div>
<div class="c" style="left:1132.7px;top:101.4px;width:53.8px;height:16.0px;text-align:center;font-size:11.2px;color:#333;line-height:17.0px;">I</div>
<div style="left:1132.2px;top:101.4px;width:1.0px;height:16.0px;background:#cfcfcf;"></div>
<div class="c" style="left:1192.5px;top:101.4px;width:41.6px;height:16.0px;text-align:center;font-size:11.2px;color:#333;line-height:17.0px;">J</div>
<div style="left:1186.0px;top:101.4px;width:1.0px;height:16.0px;background:#cfcfcf;"></div>
<div style="left:594.0px;top:104.4px;width:1.0px;height:10.0px;background:#b4b4b4;"></div>
<div style="left:597.0px;top:104.4px;width:1.0px;height:10.0px;background:#b4b4b4;"></div>
<div style="left:405.3px;top:100.9px;width:833.0px;height:1.0px;background:#cfcfcf;"></div>
<div style="left:405.3px;top:116.9px;width:833.0px;height:1.0px;background:#c4c4c4;"></div>
<div style="left:445.9px;top:101.4px;width:1.0px;height:605.2px;background:#c4c4c4;"></div>
<div style="left:404.8px;top:101.4px;width:1.0px;height:605.2px;background:#d8d8d8;"></div>
<div class="c" style="left:405.3px;top:117.4px;width:41.1px;height:23.3px;text-align:center;font-size:11.5px;color:#1b6e1b;line-height:26.7px;">1</div>
<div style="left:405.3px;top:140.2px;width:41.1px;height:1.0px;background:#cfcfcf;"></div>
<div class="c" style="left:405.3px;top:140.7px;width:41.1px;height:20.6px;text-align:center;font-size:11.5px;color:#3a3a3a;line-height:24.0px;">2</div>
<div style="left:405.3px;top:160.8px;width:41.1px;height:1.0px;background:#cfcfcf;"></div>
<div class="c" style="left:405.3px;top:161.3px;width:41.1px;height:16.9px;text-align:center;font-size:11.5px;color:#3a3a3a;line-height:20.3px;">3</div>
<div style="left:405.3px;top:177.7px;width:41.1px;height:1.0px;background:#cfcfcf;"></div>
<div class="c" style="left:405.3px;top:178.2px;width:41.1px;height:20.2px;text-align:center;font-size:11.5px;color:#3a3a3a;line-height:23.6px;">4</div>
<div style="left:405.3px;top:197.9px;width:41.1px;height:1.0px;background:#cfcfcf;"></div>
<div class="c" style="left:405.3px;top:198.4px;width:41.1px;height:16.8px;text-align:center;font-size:11.5px;color:#3a3a3a;line-height:20.2px;">5</div>
<div style="left:405.3px;top:214.7px;width:41.1px;height:1.0px;background:#cfcfcf;"></div>
<div class="c" style="left:405.3px;top:215.2px;width:41.1px;height:17.2px;text-align:center;font-size:11.5px;color:#3a3a3a;line-height:20.6px;">6</div>
<div style="left:405.3px;top:231.9px;width:41.1px;height:1.0px;background:#cfcfcf;"></div>
<div class="c" style="left:405.3px;top:232.4px;width:41.1px;height:19.2px;text-align:center;font-size:11.5px;color:#3a3a3a;line-height:22.6px;">7</div>
<div style="left:405.3px;top:251.1px;width:41.1px;height:1.0px;background:#cfcfcf;"></div>
<div class="c" style="left:405.3px;top:251.6px;width:41.1px;height:20.1px;text-align:center;font-size:11.5px;color:#3a3a3a;line-height:23.5px;">8</div>
<div style="left:405.3px;top:271.2px;width:41.1px;height:1.0px;background:#cfcfcf;"></div>
<div class="c" style="left:405.3px;top:271.7px;width:41.1px;height:19.8px;text-align:center;font-size:11.5px;color:#3a3a3a;line-height:23.2px;">9</div>
<div style="left:405.3px;top:291.0px;width:41.1px;height:1.0px;background:#cfcfcf;"></div>
<div class="c" style="left:405.3px;top:291.5px;width:41.1px;height:16.9px;text-align:center;font-size:11.5px;color:#3a3a3a;line-height:20.3px;">10</div>
<div style="left:405.3px;top:307.9px;width:41.1px;height:1.0px;background:#cfcfcf;"></div>
<div class="c" style="left:405.3px;top:308.4px;width:41.1px;height:16.8px;text-align:center;font-size:11.5px;color:#3a3a3a;line-height:20.2px;">11</div>
<div style="left:405.3px;top:324.7px;width:41.1px;height:1.0px;background:#cfcfcf;"></div>
<div class="c" style="left:405.3px;top:325.2px;width:41.1px;height:19.6px;text-align:center;font-size:11.5px;color:#3a3a3a;line-height:23.0px;">12</div>
<div style="left:405.3px;top:344.3px;width:41.1px;height:1.0px;background:#cfcfcf;"></div>
<div class="c" style="left:405.3px;top:344.8px;width:41.1px;height:16.4px;text-align:center;font-size:11.5px;color:#3a3a3a;line-height:19.8px;">13</div>
<div style="left:405.3px;top:360.7px;width:41.1px;height:1.0px;background:#cfcfcf;"></div>
<div class="c" style="left:405.3px;top:361.2px;width:41.1px;height:17.1px;text-align:center;font-size:11.5px;color:#3a3a3a;line-height:20.5px;">14</div>
<div style="left:405.3px;top:377.8px;width:41.1px;height:1.0px;background:#cfcfcf;"></div>
<div class="c" style="left:405.3px;top:378.3px;width:41.1px;height:19.9px;text-align:center;font-size:11.5px;color:#3a3a3a;line-height:23.3px;">15</div>
<div style="left:405.3px;top:397.7px;width:41.1px;height:1.0px;background:#cfcfcf;"></div>
<div class="c" style="left:405.3px;top:398.2px;width:41.1px;height:20.1px;text-align:center;font-size:11.5px;color:#3a3a3a;line-height:23.5px;">16</div>
<div style="left:405.3px;top:417.8px;width:41.1px;height:1.0px;background:#cfcfcf;"></div>
<div class="c" style="left:405.3px;top:418.3px;width:41.1px;height:20.2px;text-align:center;font-size:11.5px;color:#3a3a3a;line-height:23.6px;">17</div>
<div style="left:405.3px;top:438.0px;width:41.1px;height:1.0px;background:#cfcfcf;"></div>
<div class="c" style="left:405.3px;top:438.5px;width:41.1px;height:16.8px;text-align:center;font-size:11.5px;color:#3a3a3a;line-height:20.2px;">18</div>
<div style="left:405.3px;top:454.8px;width:41.1px;height:1.0px;background:#cfcfcf;"></div>
<div class="c" style="left:405.3px;top:455.3px;width:41.1px;height:16.4px;text-align:center;font-size:11.5px;color:#3a3a3a;line-height:19.8px;">19</div>
<div style="left:405.3px;top:471.2px;width:41.1px;height:1.0px;background:#cfcfcf;"></div>
<div class="c" style="left:405.3px;top:471.7px;width:41.1px;height:16.4px;text-align:center;font-size:11.5px;color:#3a3a3a;line-height:19.8px;">20</div>
<div style="left:405.3px;top:487.6px;width:41.1px;height:1.0px;background:#cfcfcf;"></div>
<div class="c" style="left:405.3px;top:488.1px;width:41.1px;height:17.1px;text-align:center;font-size:11.5px;color:#3a3a3a;line-height:20.5px;">21</div>
<div style="left:405.3px;top:504.7px;width:41.1px;height:1.0px;background:#cfcfcf;"></div>
<div class="c" style="left:405.3px;top:505.2px;width:41.1px;height:20.2px;text-align:center;font-size:11.5px;color:#3a3a3a;line-height:23.6px;">22</div>
<div style="left:405.3px;top:524.9px;width:41.1px;height:1.0px;background:#cfcfcf;"></div>
<div class="c" style="left:405.3px;top:525.4px;width:41.1px;height:16.5px;text-align:center;font-size:11.5px;color:#3a3a3a;line-height:19.9px;">23</div>
<div style="left:405.3px;top:541.4px;width:41.1px;height:1.0px;background:#cfcfcf;"></div>
<div class="c" style="left:405.3px;top:541.9px;width:41.1px;height:17.4px;text-align:center;font-size:11.5px;color:#3a3a3a;line-height:20.8px;">24</div>
<div style="left:405.3px;top:558.8px;width:41.1px;height:1.0px;background:#cfcfcf;"></div>
<div class="c" style="left:405.3px;top:559.3px;width:41.1px;height:17.3px;text-align:center;font-size:11.5px;color:#3a3a3a;line-height:20.7px;">25</div>
<div style="left:405.3px;top:576.1px;width:41.1px;height:1.0px;background:#cfcfcf;"></div>
<div class="c" style="left:405.3px;top:576.6px;width:41.1px;height:17.1px;text-align:center;font-size:11.5px;color:#3a3a3a;line-height:20.5px;">26</div>
<div style="left:405.3px;top:593.2px;width:41.1px;height:1.0px;background:#cfcfcf;"></div>
<div class="c" style="left:405.3px;top:593.7px;width:41.1px;height:16.8px;text-align:center;font-size:11.5px;color:#3a3a3a;line-height:20.2px;">27</div>
<div style="left:405.3px;top:610.0px;width:41.1px;height:1.0px;background:#cfcfcf;"></div>
<div class="c" style="left:405.3px;top:610.5px;width:41.1px;height:16.7px;text-align:center;font-size:11.5px;color:#3a3a3a;line-height:20.1px;">28</div>
<div style="left:405.3px;top:626.7px;width:41.1px;height:1.0px;background:#cfcfcf;"></div>
<div class="c" style="left:405.3px;top:627.2px;width:41.1px;height:16.5px;text-align:center;font-size:11.5px;color:#3a3a3a;line-height:19.9px;">29</div>
<div style="left:405.3px;top:643.2px;width:41.1px;height:1.0px;background:#cfcfcf;"></div>
<div class="c" style="left:405.3px;top:643.7px;width:41.1px;height:17.1px;text-align:center;font-size:11.5px;color:#3a3a3a;line-height:20.5px;">30</div>
<div style="left:405.3px;top:660.3px;width:41.1px;height:1.0px;background:#cfcfcf;"></div>
<div class="c" style="left:405.3px;top:660.8px;width:41.1px;height:16.7px;text-align:center;font-size:11.5px;color:#3a3a3a;line-height:20.1px;">31</div>
<div style="left:405.3px;top:677.0px;width:41.1px;height:1.0px;background:#cfcfcf;"></div>
<div class="c" style="left:405.3px;top:677.5px;width:41.1px;height:17.1px;text-align:center;font-size:11.5px;color:#3a3a3a;line-height:20.5px;">32</div>
<div style="left:405.3px;top:694.1px;width:41.1px;height:1.0px;background:#cfcfcf;"></div>
<div class="c" style="left:405.3px;top:694.6px;width:41.1px;height:16.9px;text-align:center;font-size:11.5px;color:#3a3a3a;line-height:20.3px;">33</div>
<div style="left:405.3px;top:711.0px;width:41.1px;height:1.0px;background:#cfcfcf;"></div>
<div style="left:446.4px;top:139.7px;width:687.3px;height:1.6px;background:#1a73e8;"></div>
<div style="left:1132.1px;top:117.4px;width:1.4px;height:23.3px;background:#1a73e8;"></div>
<div style="left:1130.5px;top:138.1px;width:5.0px;height:5.0px;background:#1a73e8;"></div>
<div style="left:1234.1px;top:117.4px;width:4.2px;height:583.4px;background:#f0f0f0;"></div>
<div style="left:1234.4px;top:117.9px;width:3.9px;height:234.9px;background:#b2b2b2;"></div>
</div>

<!-- horizontal scrollbar -->
<div class="abs" style="left:446.4px;top:700.8px;width:791.9px;height:5.8px;background:#f0f0f0"></div>
<div class="abs" style="left:446.4px;top:700.8px;width:277px;height:5.8px;background:#b4b4b4"></div>
<!-- sheet tab bar -->
<div class="abs" style="left:405.3px;top:706px;width:833.1px;height:33.6px;background:#f7f8fa;border-top:1px solid #bcbcbc"></div>
<svg style="left:415.6px;top:720.2px" width="8.6" height="8.6" viewBox="0 0 8.6 8.6" fill="none" stroke="#333" stroke-width="1.1" stroke-linecap="round" stroke-linejoin="round"><path d="M.7.6v7.400M7.800.8L4 4.300l3.800 3.500"></path></svg>
<svg style="left:444.4px;top:720.2px" width="5.4" height="8.6" viewBox="0 0 5.4 8.6" fill="none" stroke="#333" stroke-width="1.1" stroke-linecap="round" stroke-linejoin="round"><path d="M4.600.8L.8 4.300l3.800 3.500"></path></svg>
<svg style="left:472.6px;top:720.2px" width="5.4" height="8.6" viewBox="0 0 5.4 8.6" fill="none" stroke="#333" stroke-width="1.1" stroke-linecap="round" stroke-linejoin="round"><path d="M.8.8l3.800 3.500L.8 7.800"></path></svg>
<svg style="left:498.6px;top:720.2px" width="8.6" height="8.6" viewBox="0 0 8.6 8.6" fill="none" stroke="#333" stroke-width="1.1" stroke-linecap="round" stroke-linejoin="round"><path d="M7.900.6v7.400M.8.8l3.800 3.500L.8 7.800"></path></svg>
<div class="abs" style="left:520.4px;top:711px;width:25px;height:24.6px;background:#fff;border-radius:2px"></div>
<svg style="left:527.6px;top:718.6px" width="10.4" height="10.4" viewBox="0 0 10.4 10.4" fill="none" stroke="#555" stroke-width="1.3"><path d="M5.200 0v10.400M0 5.200h10.400"></path></svg>
<div class="t" style="left:565.8px;top:714.6px;font-size:10.2px;font-weight:bold;line-height:18px;color:#222">基金定投性价比对比</div>
<div class="abs" style="left:565.8px;top:730.2px;width:91.6px;height:1.8px;background:#1b6e1b"></div>
<!-- status bar -->
<div class="abs" style="left:405.3px;top:739.2px;width:833.1px;height:25.4px;background:#f0f0f0;border-top:1px solid #e0e0e0;border-bottom:1px solid #d0d0d0;border-radius:0 0 4px 0"></div>
<div class="abs" style="left:410.2px;top:744.4px;width:168.6px;height:18px;background:#fff;border:1px solid #cfcfcf;border-radius:3px"></div>
<div class="t" style="left:414.4px;top:745.4px;font-size:10.2px;line-height:18px;color:#333">搜索</div>
<svg style="left:588.6px;top:750px" width="9.6" height="6" viewBox="0 0 9.6 6" fill="none" stroke="#b8b8b8" stroke-width="1.2" stroke-linecap="round" stroke-linejoin="round"><path d="M.8 5.200L4.800 1l4 4.200"></path></svg>
<svg style="left:617px;top:750.4px" width="9.6" height="6" viewBox="0 0 9.6 6" fill="none" stroke="#b8b8b8" stroke-width="1.2" stroke-linecap="round" stroke-linejoin="round"><path d="M.8.8l4 4.200 4-4.200"></path></svg>
<div class="abs" style="left:638.2px;top:746.6px;width:1px;height:12.4px;background:#dedede"></div>
<div class="t" style="left:648px;top:745.1px;font-size:10.2px;line-height:18px;color:#444;letter-spacing:.2px">工作表 1，共 1 张</div>
<div class="abs" style="left:738.4px;top:746.6px;width:1px;height:12.4px;background:#dedede"></div>
<div class="t" style="left:747.2px;top:745.1px;font-size:10.2px;line-height:18px;color:#444;letter-spacing:.05px">已选中：1 行 8 列</div>
<div class="abs" style="left:836.4px;top:746.6px;width:1px;height:12.4px;background:#dedede"></div>
<div class="t" style="left:846px;top:745.1px;font-size:10.2px;line-height:18px;color:#444;letter-spacing:.2px">平均值: ; 求和: 0</div>
<div class="abs" style="left:931px;top:746.6px;width:1px;height:12.4px;background:#dedede"></div>
<div class="t" style="left:940.6px;top:745.1px;font-size:10.2px;line-height:18px;color:#444">只读</div>
<div class="abs" style="left:1138.6px;top:752.3px;width:8.2px;height:1.2px;background:#858585"></div>
<div class="t" style="left:1161.2px;top:745px;font-size:10.4px;line-height:18px;color:#4a4a4a">100%</div>
<svg style="left:1192.8px;top:750.4px" width="6.6" height="4.4" viewBox="0 0 6.6 4.4"><path fill="#444" d="M0 0h6.600L3.300 4.400z"></path></svg>
<div class="abs" style="left:1216px;top:752.3px;width:8.2px;height:1.2px;background:#6a6a6a"></div>
<div class="abs" style="left:1219.5px;top:748.8px;width:1.2px;height:8.2px;background:#6a6a6a"></div>


</body></html>
